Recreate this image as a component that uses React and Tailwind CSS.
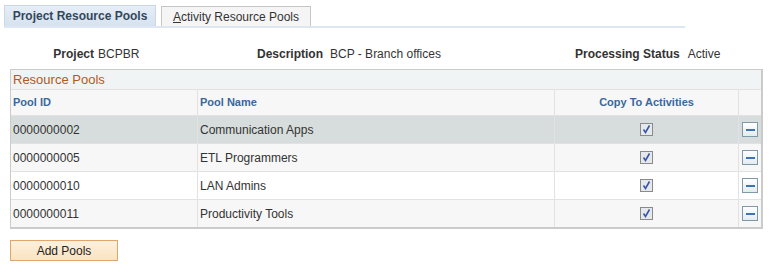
const POOLS = [
  { id: "0000000002", name: "Communication Apps" },
  { id: "0000000005", name: "ETL Programmers" },
  { id: "0000000010", name: "LAN Admins" },
  { id: "0000000011", name: "Productivity Tools" },
];

const rowBg = ["bg-[#d7dddc]", "bg-[#f7f7f7]", "bg-white", "bg-[#f7f7f7]"];

function Checkbox() {
  return (
    <span className="inline-flex h-[13px] w-[13px] items-center justify-center border border-[#8a8a8a] bg-[#e6e9ec]">
      <svg viewBox="0 0 11 11" className="h-[11px] w-[11px]">
        <path d="M2.5 5.5 L4.5 8.5 L8.5 1.5" fill="none" stroke="#3a55a8" strokeWidth="1.6" />
      </svg>
    </span>
  );
}

function MinusButton() {
  return (
    <span className="inline-flex h-[15px] w-[16px] items-center justify-center border border-[#7d9aa8] bg-gradient-to-b from-[#ffffff] to-[#e4ebef]">
      <span className="block h-[2px] w-[9px] bg-[#3c74b8]" />
    </span>
  );
}

export default function App() {
  return (
    <div className="h-[275px] w-[784px] bg-white font-['Liberation_Sans',Arial,sans-serif] text-[12px] text-[#333]">
      {/* Tabs */}
      <div className="flex items-end pl-[4px] pt-[5px]">
        <div className="flex h-[21px] w-[152px] items-center justify-center border border-[#c9d7e6] border-b-0 bg-gradient-to-b from-[#e6eef7] to-[#d6e2ef] text-[12px] font-bold text-[#33475b]">
          Project Resource Pools
        </div>
        <div className="ml-[5px] flex h-[20px] w-[150px] items-center justify-center border border-[#c6c6c6] border-b-0 bg-[#f5f5f5] text-[12px] text-[#333]">
          <span><span className="underline">A</span>ctivity Resource Pools</span>
        </div>
      </div>
      <div className="ml-[4px] h-[2px] w-[681px] bg-[#dde6f2]" />

      {/* Info row */}
      <div className="mt-[19px] flex h-[14px] items-center">
        <span className="w-[94px] text-right font-bold text-[#333]">Project</span>
        <span className="ml-[4px] w-[136px]">BCPBR</span>
        <span className="w-[89px] text-right font-bold text-[#333]">Description</span>
        <span className="ml-[7px] w-[245px]">BCP - Branch offices</span>
        <span className="font-bold text-[#333]">Processing Status</span>
        <span className="ml-[8px]">Active</span>
      </div>

      {/* Grid */}
      <div className="ml-[10px] mt-[8px] w-[753px] border border-[#cbcbcb] border-b-2 border-r-2">
        <div className="flex h-[19px] items-center bg-[#f1f4f5] px-[2px] text-[13px] text-[#b4581c]">
          Resource Pools
        </div>
        <div className="grid h-[26px] grid-cols-[186px_357px_184px_1fr] border-t border-[#e2e2e2] bg-[#f7f7f7] text-[11px] font-bold text-[#39689c]">
          <div className="flex items-center px-[2px]">Pool ID</div>
          <div className="flex items-center border-l border-[#e2e2e2] px-[2px]">Pool Name</div>
          <div className="flex items-center justify-center border-l border-[#e2e2e2]">Copy To Activities</div>
          <div className="border-l border-[#e2e2e2]" />
        </div>
        {POOLS.map((p, i) => (
          <div
            key={p.id}
            className={`grid h-[28px] grid-cols-[186px_357px_184px_1fr] border-t border-[#e2e2e2] ${rowBg[i]}`}
          >
            <div className="flex items-center px-[2px]">{p.id}</div>
            <div className="flex items-center border-l border-[#e2e2e2] px-[2px]">{p.name}</div>
            <div className="flex items-center justify-center border-l border-[#e2e2e2]">
              <Checkbox />
            </div>
            <div className="flex items-center justify-center border-l border-[#e2e2e2]">
              <MinusButton />
            </div>
          </div>
        ))}
      </div>

      {/* Add button */}
      <button className="ml-[10px] mt-[11px] flex h-[21px] w-[108px] items-center justify-center border border-[#e2a56c] bg-gradient-to-b from-[#fdf1de] to-[#fbe3bf] text-[12px] text-[#222]">
        Add Pools
      </button>
    </div>
  );
}
